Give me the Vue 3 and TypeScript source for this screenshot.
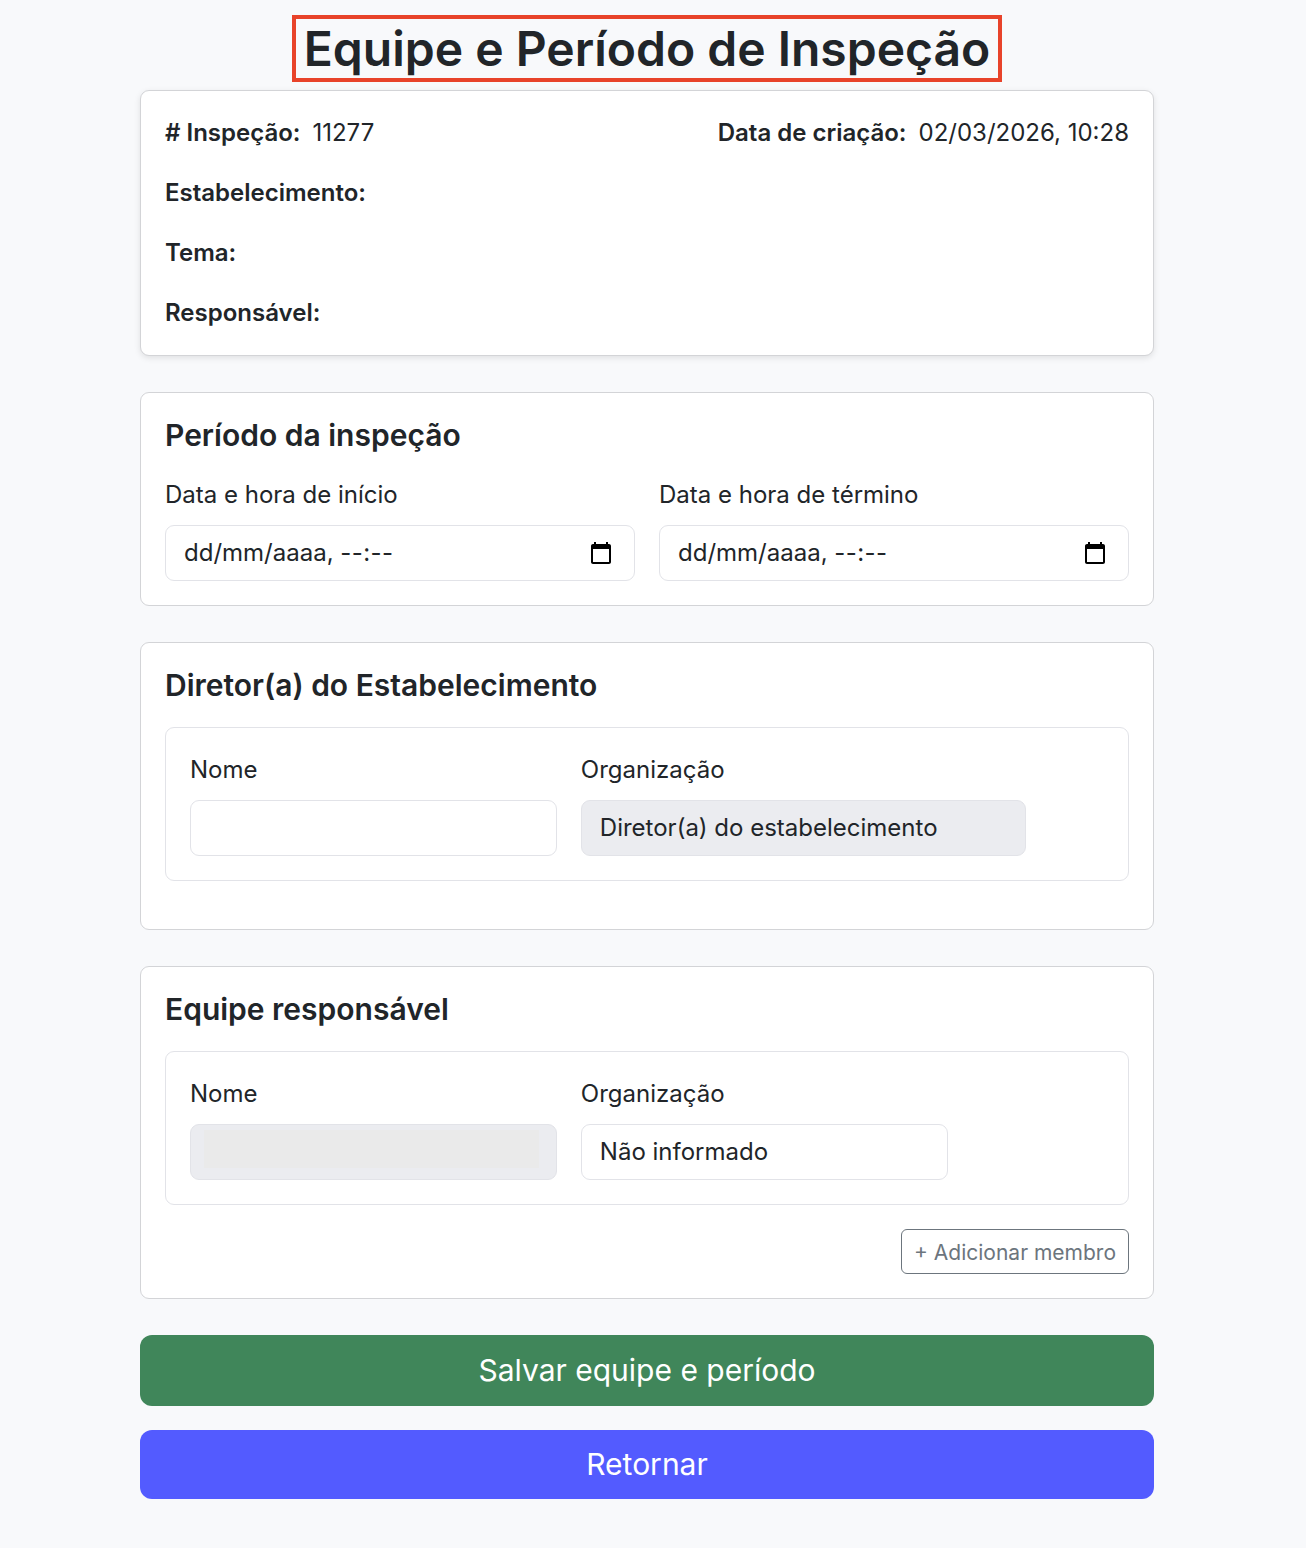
<script setup lang="ts">
const infoRows: string[] = ['Estabelecimento:', 'Tema:', 'Responsável:']
const dateFields: string[] = ['Data e hora de início', 'Data e hora de término']
</script>

<template>
  <main class="page">
    <div class="title-wrap">
      <h1 class="title">Equipe e Período de Inspeção</h1>
    </div>

    <section class="card info-card">
      <div class="info-top">
        <p class="info-line"><strong>#&nbsp;Inspeção:</strong><span>11277</span></p>
        <p class="info-line"><strong>Data de criação:</strong><span>02/03/2026, 10:28</span></p>
      </div>
      <p v-for="row in infoRows" :key="row" class="info-line"><strong>{{ row }}</strong></p>
    </section>

    <section class="card">
      <h2 class="section-title">Período da inspeção</h2>
      <div class="date-grid">
        <div v-for="field in dateFields" :key="field" class="field">
          <label class="label">{{ field }}</label>
          <div class="control date-control">
            <span>dd/mm/aaaa, <span class="time">--:--</span></span>
            <svg class="calendar" viewBox="0 0 24 24" width="24" height="24" aria-hidden="true">
              <path d="M20 3h-1V1h-2v2H7V1H5v2H4c-1.1 0-2 .9-2 2v16c0 1.1.9 2 2 2h16c1.1 0 2-.9 2-2V5c0-1.1-.9-2-2-2zm0 18H4V8h16v13z" />
            </svg>
          </div>
        </div>
      </div>
    </section>

    <section class="card director-card">
      <h2 class="section-title">Diretor(a) do Estabelecimento</h2>
      <div class="member">
        <div class="field span-5">
          <label class="label">Nome</label>
          <input class="control" type="text" />
        </div>
        <div class="field span-6">
          <label class="label">Organização</label>
          <input class="control disabled" type="text" value="Diretor(a) do estabelecimento" readonly />
        </div>
      </div>
    </section>

    <section class="card">
      <h2 class="section-title">Equipe responsável</h2>
      <div class="member">
        <div class="field span-5">
          <label class="label">Nome</label>
          <div class="control disabled masked"></div>
        </div>
        <div class="field span-5">
          <label class="label">Organização</label>
          <input class="control" type="text" value="Não informado" />
        </div>
      </div>
      <div class="add-row">
        <button class="add-btn" type="button">+ Adicionar membro</button>
      </div>
    </section>

    <div class="actions">
      <button class="action save" type="button">Salvar equipe e período</button>
      <button class="action back" type="button">Retornar</button>
    </div>
  </main>
</template>

<style scoped>
.page {
  box-sizing: border-box;
  width: 1014px;
  min-height: 1548px;
  margin: 0 auto;
  padding: 15px 0 49px;
  position: relative;
  left: -6px;
  font-family: Inter, "Liberation Sans", sans-serif;
  font-size: 24px;
  line-height: 36px;
  color: #212529;
}
.title-wrap {
  display: flex;
  justify-content: center;
  margin-bottom: 8px;
}
.title {
  margin: 0;
  padding: 0 8px;
  border: 4px solid #e8432a;
  font-size: 48px;
  font-weight: 600;
  line-height: 59px;
}
.card {
  box-sizing: border-box;
  margin-bottom: 36px;
  padding: 24px;
  background: #fff;
  border: 1px solid #d3d4d7;
  border-radius: 9px;
}
.info-card {
  box-shadow: 0 2px 6px rgba(0, 0, 0, 0.1);
}
.info-top {
  display: flex;
  justify-content: space-between;
}
.info-line {
  margin: 0 0 24px;
}
.info-card > .info-line:last-child {
  margin-bottom: 0;
}
.info-line strong {
  font-weight: 600;
  margin-right: 12px;
}
.section-title {
  margin: 0 0 24px;
  font-size: 30px;
  font-weight: 600;
  line-height: 36px;
}
.date-grid {
  display: grid;
  grid-template-columns: 1fr 1fr;
  gap: 24px;
}
.field {
  display: flex;
  flex-direction: column;
  min-width: 0;
}
.label {
  margin-bottom: 12px;
}
.control {
  box-sizing: border-box;
  width: 100%;
  height: 56px;
  padding: 8px 18px 10px;
  background: #fff;
  border: 1px solid #e2e3e8;
  border-radius: 9px;
  font: inherit;
  color: #212529;
  outline: none;
}
.date-control {
  display: flex;
  align-items: center;
  justify-content: space-between;
  padding: 9px 18px;
}
.time {
  letter-spacing: 0.4px;
}
.calendar {
  display: block;
  margin-right: 3px;
  fill: #000;
}
.disabled {
  background: #ebecf0;
}
.masked {
  background: linear-gradient(#eaeaea, #eaeaea) 13px 5px / 335px 38px no-repeat, #ebecf0;
}
.director-card {
  padding-bottom: 48px;
}
.member {
  display: grid;
  grid-template-columns: repeat(12, 1fr);
  gap: 24px;
  padding: 24px;
  border: 1px solid #e2e3e8;
  border-radius: 9px;
}
.span-5 {
  grid-column: span 5;
}
.span-6 {
  grid-column: span 6;
}
.add-row {
  display: flex;
  justify-content: flex-end;
  margin-top: 24px;
}
.add-btn {
  box-sizing: border-box;
  height: 45px;
  padding: 1px 12px 0;
  background: transparent;
  border: 1px solid #6c757d;
  border-radius: 6px;
  font-family: inherit;
  font-size: 21px;
  line-height: 31px;
  color: #6c757d;
}
.actions {
  display: flex;
  flex-direction: column;
  gap: 24px;
}
.action {
  box-sizing: border-box;
  width: 100%;
  border: 0;
  border-radius: 12px;
  font-family: inherit;
  font-size: 30px;
  font-weight: 400;
  line-height: 45px;
  color: #fff;
}
.save {
  height: 71px;
  background: #40865a;
}
.back {
  height: 69px;
  background: #535bff;
}
</style>

<style>
html,
body {
  margin: 0;
  background: #f8f9fb;
}
</style>
